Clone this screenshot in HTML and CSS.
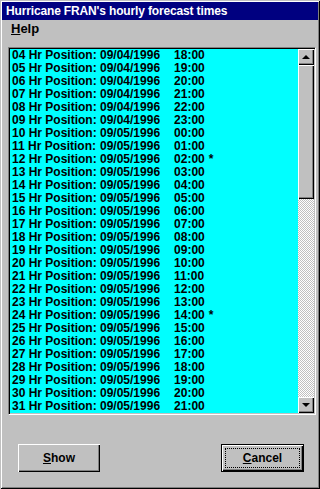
FILE: index.html
```html
<!DOCTYPE html>
<html lang="en">
<head>
    <meta charset="UTF-8">
    <title>Hurricane FRAN's hourly forecast times</title>
    <link rel="stylesheet" href="styles.css">
</head>
<body>
    <div class="window">
        <div class="title-bar">Hurricane FRAN's hourly forecast times</div>
        <div class="menu-bar">
            <span class="menu-item"><u>H</u>elp</span>
        </div>

        <div class="list-box">
            <div class="list-rows">
                <div class="row"><span class="label">04 Hr Position:</span><span class="date">09/04/1996</span><span class="time">18:00</span></div>
                <div class="row"><span class="label">05 Hr Position:</span><span class="date">09/04/1996</span><span class="time">19:00</span></div>
                <div class="row"><span class="label">06 Hr Position:</span><span class="date">09/04/1996</span><span class="time">20:00</span></div>
                <div class="row"><span class="label">07 Hr Position:</span><span class="date">09/04/1996</span><span class="time">21:00</span></div>
                <div class="row"><span class="label">08 Hr Position:</span><span class="date">09/04/1996</span><span class="time">22:00</span></div>
                <div class="row"><span class="label">09 Hr Position:</span><span class="date">09/04/1996</span><span class="time">23:00</span></div>
                <div class="row"><span class="label">10 Hr Position:</span><span class="date">09/05/1996</span><span class="time">00:00</span></div>
                <div class="row"><span class="label">11 Hr Position:</span><span class="date">09/05/1996</span><span class="time">01:00</span></div>
                <div class="row"><span class="label">12 Hr Position:</span><span class="date">09/05/1996</span><span class="time">02:00</span><span class="mark">*</span></div>
                <div class="row"><span class="label">13 Hr Position:</span><span class="date">09/05/1996</span><span class="time">03:00</span></div>
                <div class="row"><span class="label">14 Hr Position:</span><span class="date">09/05/1996</span><span class="time">04:00</span></div>
                <div class="row"><span class="label">15 Hr Position:</span><span class="date">09/05/1996</span><span class="time">05:00</span></div>
                <div class="row"><span class="label">16 Hr Position:</span><span class="date">09/05/1996</span><span class="time">06:00</span></div>
                <div class="row"><span class="label">17 Hr Position:</span><span class="date">09/05/1996</span><span class="time">07:00</span></div>
                <div class="row"><span class="label">18 Hr Position:</span><span class="date">09/05/1996</span><span class="time">08:00</span></div>
                <div class="row"><span class="label">19 Hr Position:</span><span class="date">09/05/1996</span><span class="time">09:00</span></div>
                <div class="row"><span class="label">20 Hr Position:</span><span class="date">09/05/1996</span><span class="time">10:00</span></div>
                <div class="row"><span class="label">21 Hr Position:</span><span class="date">09/05/1996</span><span class="time">11:00</span></div>
                <div class="row"><span class="label">22 Hr Position:</span><span class="date">09/05/1996</span><span class="time">12:00</span></div>
                <div class="row"><span class="label">23 Hr Position:</span><span class="date">09/05/1996</span><span class="time">13:00</span></div>
                <div class="row"><span class="label">24 Hr Position:</span><span class="date">09/05/1996</span><span class="time">14:00</span><span class="mark">*</span></div>
                <div class="row"><span class="label">25 Hr Position:</span><span class="date">09/05/1996</span><span class="time">15:00</span></div>
                <div class="row"><span class="label">26 Hr Position:</span><span class="date">09/05/1996</span><span class="time">16:00</span></div>
                <div class="row"><span class="label">27 Hr Position:</span><span class="date">09/05/1996</span><span class="time">17:00</span></div>
                <div class="row"><span class="label">28 Hr Position:</span><span class="date">09/05/1996</span><span class="time">18:00</span></div>
                <div class="row"><span class="label">29 Hr Position:</span><span class="date">09/05/1996</span><span class="time">19:00</span></div>
                <div class="row"><span class="label">30 Hr Position:</span><span class="date">09/05/1996</span><span class="time">20:00</span></div>
                <div class="row"><span class="label">31 Hr Position:</span><span class="date">09/05/1996</span><span class="time">21:00</span></div>
            </div>

            <!-- vertical scroll bar -->
            <div class="scroll-bar">
                <div class="scroll-btn"><span class="arrow-up"></span></div>
                <div class="scroll-thumb"></div>
                <div class="scroll-track"></div>
                <div class="scroll-btn"><span class="arrow-down"></span></div>
            </div>
        </div>

        <div class="button-row">
            <button class="btn"><u>S</u>how</button>
            <button class="btn btn-default"><span class="focus"><u>C</u>ancel</span></button>
        </div>
    </div>
</body>
</html>
```

FILE: styles.css
```css
* {
    margin: 0;
    padding: 0;
    box-sizing: border-box;
}

body {
    background: #c0c0c0;
    font-family: "Liberation Sans", Arial, sans-serif;
    font-size: 12px;
    font-weight: bold;
    color: #000;
}

/* window frame */
.window {
    width: 320px;
    height: 489px;
    background: #c0c0c0;
    padding: 2px;
    box-shadow: inset 1px 1px #c0c0c0, inset -1px -1px #000,
                inset 2px 2px #fff, inset -2px -2px #808080;
}

.title-bar {
    height: 18px;
    background: #000080;
    color: #fff;
    line-height: 18px;
    padding-left: 4px;
    white-space: nowrap;
    letter-spacing: -0.15px;
}

.menu-bar {
    height: 18px;
    line-height: 18px;
    padding-left: 9px;
}

.menu-item {
    font-size: 13px;
}

/* list box */
.list-box {
    display: flex;
    width: 308px;
    height: 368px;
    margin: 9px 0 0 6px;
    border: 1px solid;
    border-color: #808080 #fff #fff #808080;
    box-shadow: inset 1px 1px #000, inset -1px -1px #c0c0c0;
    padding: 1px;
}

.list-rows {
    flex: 1;
    background: #00ffff;
    padding-left: 2px;
    overflow: hidden;
}

.row {
    height: 13px;
    line-height: 13px;
    white-space: nowrap;
}

.label {
    display: inline-block;
    width: 88px;
}

.time {
    margin-left: 14px;
}

.mark {
    margin-left: 4px;
}

/* scroll bar */
.scroll-bar {
    width: 16px;
    display: flex;
    flex-direction: column;
}

.scroll-btn,
.scroll-thumb {
    background: #c0c0c0;
    box-shadow: inset 1px 1px #fff, inset -1px -1px #000, inset -2px -2px #808080;
}

.scroll-btn {
    height: 16px;
    display: flex;
    align-items: center;
    justify-content: center;
}

.scroll-thumb {
    height: 134px;
}

.scroll-track {
    flex: 1;
    background: repeating-conic-gradient(#c0c0c0 0 25%, #fff 0 50%) 0 0 / 2px 2px;
}

.arrow-up,
.arrow-down {
    width: 0;
    height: 0;
    border-left: 4px solid transparent;
    border-right: 4px solid transparent;
}

.arrow-up {
    border-bottom: 4px solid #000;
}

.arrow-down {
    border-top: 4px solid #000;
}

/* buttons */
.button-row {
    display: flex;
    justify-content: space-between;
    margin-top: 29px;
    padding: 0 14px 0 16px;
}

.btn {
    width: 82px;
    height: 28px;
    background: #c0c0c0;
    border: none;
    font-family: inherit;
    font-size: 12px;
    font-weight: bold;
    color: #000;
    box-shadow: inset 1px 1px #fff, inset -1px -1px #000, inset -2px -2px #808080;
}

.btn-default {
    width: 83px;
    padding: 4px;
    box-shadow: inset 0 0 0 1px #000, inset 2px 2px #fff,
                inset -2px -2px #000, inset -3px -3px #808080;
}

.focus {
    display: flex;
    align-items: center;
    justify-content: center;
    height: 100%;
    border: 1px dotted #000;
}
```
